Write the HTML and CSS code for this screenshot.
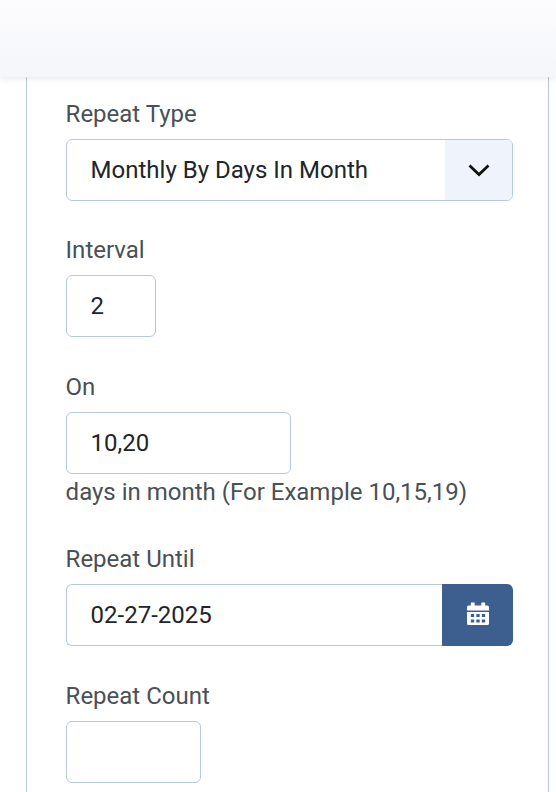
FILE: index.html
```html
<!DOCTYPE html>
<html lang="en">
<head>
    <meta charset="UTF-8">
    <meta name="viewport" content="width=device-width, initial-scale=1.0">
    <title>Repeat Settings</title>
    <link rel="stylesheet" href="styles.css">
</head>
<body>

<header class="topbar"></header>

<main class="card">
    <div class="field">
        <label class="field-label">Repeat Type</label>
        <div class="select-box">
            <span class="select-value">Monthly By Days In Month</span>
            <span class="select-arrow">
                <svg class="arrow-icon" width="22" height="14" viewBox="0 0 22 14"><path d="M1.500 2.500 L11 11.500 L20.500 2.500" fill="none" stroke="#111" stroke-width="2.8"/></svg>
            </span>
        </div>
    </div>

    <div class="field">
        <label class="field-label">Interval</label>
        <input class="text-input interval-input" type="text" value="2">
    </div>

    <div class="field">
        <label class="field-label">On</label>
        <input class="text-input on-input" type="text" value="10,20">
        <div class="field-help">days in month (For Example 10,15,19)</div>
    </div>

    <div class="field">
        <label class="field-label">Repeat Until</label>
        <div class="date-box">
            <input class="date-input" type="text" value="02-27-2025">
            <span class="date-btn">
                <svg class="date-icon" width="22" height="24" viewBox="1 0 20 24" preserveAspectRatio="none">
                    <path fill="#fff" d="M5 0.500h2.500a.5.5 0 0 1 .5.5v2.500h6V1a.5.5 0 0 1 .5-.5H17a.5.5 0 0 1 .5.5v2.500h2A1.500 1.500 0 0 1 21 5v3.500H1V5a1.500 1.500 0 0 1 1.500-1.500h2V1a.5.5 0 0 1 .5-.5z"/>
                    <path fill="#fff" fill-rule="evenodd" d="M1 10h20v11.500a1.500 1.500 0 0 1-1.500 1.500h-17A1.500 1.500 0 0 1 1 21.500z M4.500 12v3h3v-3z M9.500 12v3h3v-3z M14.500 12v3h3v-3z M4.500 17.500v3h3v-3z M9.500 17.500v3h3v-3z M14.500 17.500v3h3v-3z"/>
                </svg>
            </span>
        </div>
    </div>

    <div class="field">
        <label class="field-label">Repeat Count</label>
        <input class="text-input count-input" type="text">
    </div>
</main>

</body>
</html>
```

FILE: styles.css
```css
body {
    margin: 0;
    height: 792px;
    overflow: hidden;
    background: #fff;
    font-family: Roboto, "Liberation Sans", sans-serif;
    color: #212529;
}
.topbar {
    height: 77px;
    background: linear-gradient(#fcfcfe, #f5f6fa);
    box-shadow: 0 2px 6px rgba(40, 50, 80, 0.1);
    position: relative;
}
.card {
    box-sizing: border-box;
    width: 523px;
    min-height: 715px;
    margin-left: 26px;
    padding: 20px 35px 0 38.6px;
    border-left: 1px solid #b7c8e3;
    border-right: 1px solid #b7c8e3;
}
.field {
    margin-bottom: 32.4px;
}
.field-label {
    display: block;
    height: 34px;
    line-height: 34px;
    font-size: 24px;
    color: #495057;
    margin-bottom: 8px;
}
.text-input,
.date-input {
    box-sizing: border-box;
    height: 62px;
    padding: 0 24px;
    font-family: inherit;
    font-size: 24px;
    color: #212529;
    background: #fff;
    border: 1px solid #b7c8e3;
    outline: none;
}
.text-input {
    display: block;
    border-radius: 6px;
}
.interval-input { width: 90px; }
.on-input { width: 225px; }
.count-input { width: 135px; }
.field-help {
    font-size: 24px;
    line-height: 36px;
    color: #495057;
}
.select-box {
    display: flex;
    box-sizing: border-box;
    height: 62px;
    width: 447px;
    border: 1px solid #b7c8e3;
    border-radius: 6px;
    overflow: hidden;
}
.select-value {
    flex: 1;
    padding-left: 24px;
    line-height: 60px;
    font-size: 24px;
}
.select-arrow {
    width: 67px;
    display: flex;
    align-items: center;
    justify-content: center;
    background: #eff3fb;
}
.arrow-icon {
    margin-left: 1px;
}
.date-box {
    display: flex;
    height: 62px;
    width: 447px;
}
.date-input {
    flex: 1;
    min-width: 0;
    border-right: none;
    border-radius: 6px 0 0 6px;
}
.date-btn {
    width: 71px;
    display: flex;
    align-items: center;
    justify-content: center;
    background: #3c5f8f;
    border-radius: 0 6px 6px 0;
}
.date-icon {
    margin: 0 0 2px 1px;
}
```
